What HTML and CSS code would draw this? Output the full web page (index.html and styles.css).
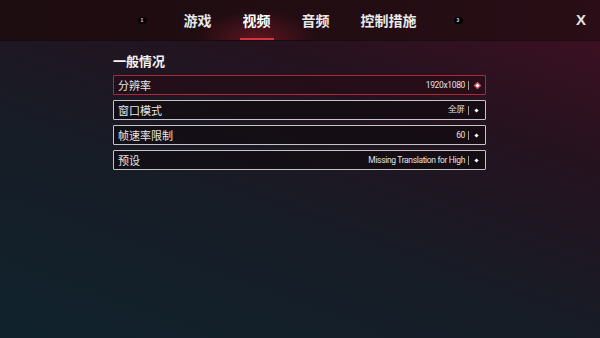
FILE: index.html
```html
<!DOCTYPE html>
<html lang="zh">
<head>
  <meta charset="UTF-8" />
  <meta name="viewport" content="width=device-width, initial-scale=1.0" />
  <title>设置 - 视频</title>
  <link rel="stylesheet" href="styles.css">
</head>
<body>
  <header class="topbar">
    <nav class="tabs">
      <span class="key">1</span>
      <a class="tab">游戏</a>
      <a class="tab active">视频</a>
      <a class="tab">音频</a>
      <a class="tab">控制措施</a>
      <span class="key">3</span>
    </nav>
    <button class="close">X</button>
  </header>

  <main class="settings">
    <h2>一般情况</h2>
    <div class="option selected">
      <span class="label">分辨率</span>
      <span class="value">1920x1080</span>
      <span class="sep"></span>
      <span class="pip"></span>
    </div>
    <div class="option">
      <span class="label">窗口模式</span>
      <span class="value">全屏</span>
      <span class="sep"></span>
      <span class="pip"></span>
    </div>
    <div class="option">
      <span class="label">帧速率限制</span>
      <span class="value">60</span>
      <span class="sep"></span>
      <span class="pip"></span>
    </div>
    <div class="option">
      <span class="label">预设</span>
      <span class="value">Missing Translation for High</span>
      <span class="sep"></span>
      <span class="pip"></span>
    </div>
  </main>
</body>
</html>
```

FILE: styles.css
```css
html, body {
  margin: 0;
  height: 100%;
}
body {
  font-family: "Noto Sans CJK SC", "Noto Sans", sans-serif;
  color: #eee;
  background: linear-gradient(20deg, #10232d 0%, #171c26 40%, #25121f 70%, #421022 100%);
  overflow: hidden;
}
.topbar {
  position: relative;
  height: 40px;
  background: radial-gradient(ellipse 60px 30px at 257px 40px, rgba(170, 30, 45, 0.45), transparent),
              linear-gradient(90deg, #1d0c10, #220d13 60%, #2a0d16);
  display: flex;
  justify-content: center;
  align-items: center;
  box-shadow: 0 1px 0 rgba(0, 0, 0, 0.4);
}
.tabs {
  display: flex;
  align-items: center;
  height: 100%;
  gap: 31px;
}
.tab {
  position: relative;
  height: 100%;
  display: flex;
  align-items: center;
  font-size: 14px;
  font-weight: 700;
  color: #e8e8e8;
  padding-bottom: 1px;
  box-sizing: border-box;
}
.tab.active {
  color: #fff;
}
.tab.active::after {
  content: "";
  position: absolute;
  left: -3px;
  right: -3px;
  bottom: 0;
  height: 2px;
  background: #d7323f;
}
.key {
  width: 9px;
  height: 7px;
  border-radius: 50%;
  background: #050304;
  color: #ddd;
  font: 700 5px/7px "Liberation Sans", sans-serif;
  text-align: center;
}
.tabs .key:first-child {
  margin-right: 6px;
}
.tabs .key:last-child {
  margin-left: 6px;
}
.close {
  position: absolute;
  right: 14px;
  top: 11px;
  background: none;
  border: none;
  padding: 0;
  color: #e4e4e4;
  font: 700 15px/18px "Liberation Sans", sans-serif;
}
.settings {
  padding: 13px 0 0 113px;
  width: 373px;
}
h2 {
  margin: 0 0 6px;
  font-size: 13px;
  line-height: 16px;
  font-weight: 700;
  color: #f2f2f2;
}
.option {
  height: 20px;
  box-sizing: border-box;
  border: 1.5px solid #c4c4c4;
  border-radius: 1px;
  background: rgba(16, 9, 14, 0.65);
  display: flex;
  align-items: center;
  padding: 0 7px 0 4px;
  margin-bottom: 5px;
}
.option.selected {
  border-color: #a82a3a;
  background: rgba(40, 10, 18, 0.55);
}
.label {
  flex: 1;
  font-size: 11px;
  color: #e6e6e6;
}
.value {
  font-family: "Roboto", sans-serif;
  font-size: 8.5px;
  letter-spacing: -0.35px;
  color: #e2e2e2;
}
.sep {
  width: 1px;
  height: 9px;
  background: #9a9a9a;
  margin: 0 6px 0 3px;
}
.pip {
  width: 3px;
  height: 3px;
  background: #fff;
  transform: rotate(45deg);
}
.selected .pip {
  border: 1.5px solid #d33a4a;
  margin-right: -2px;
}
```
